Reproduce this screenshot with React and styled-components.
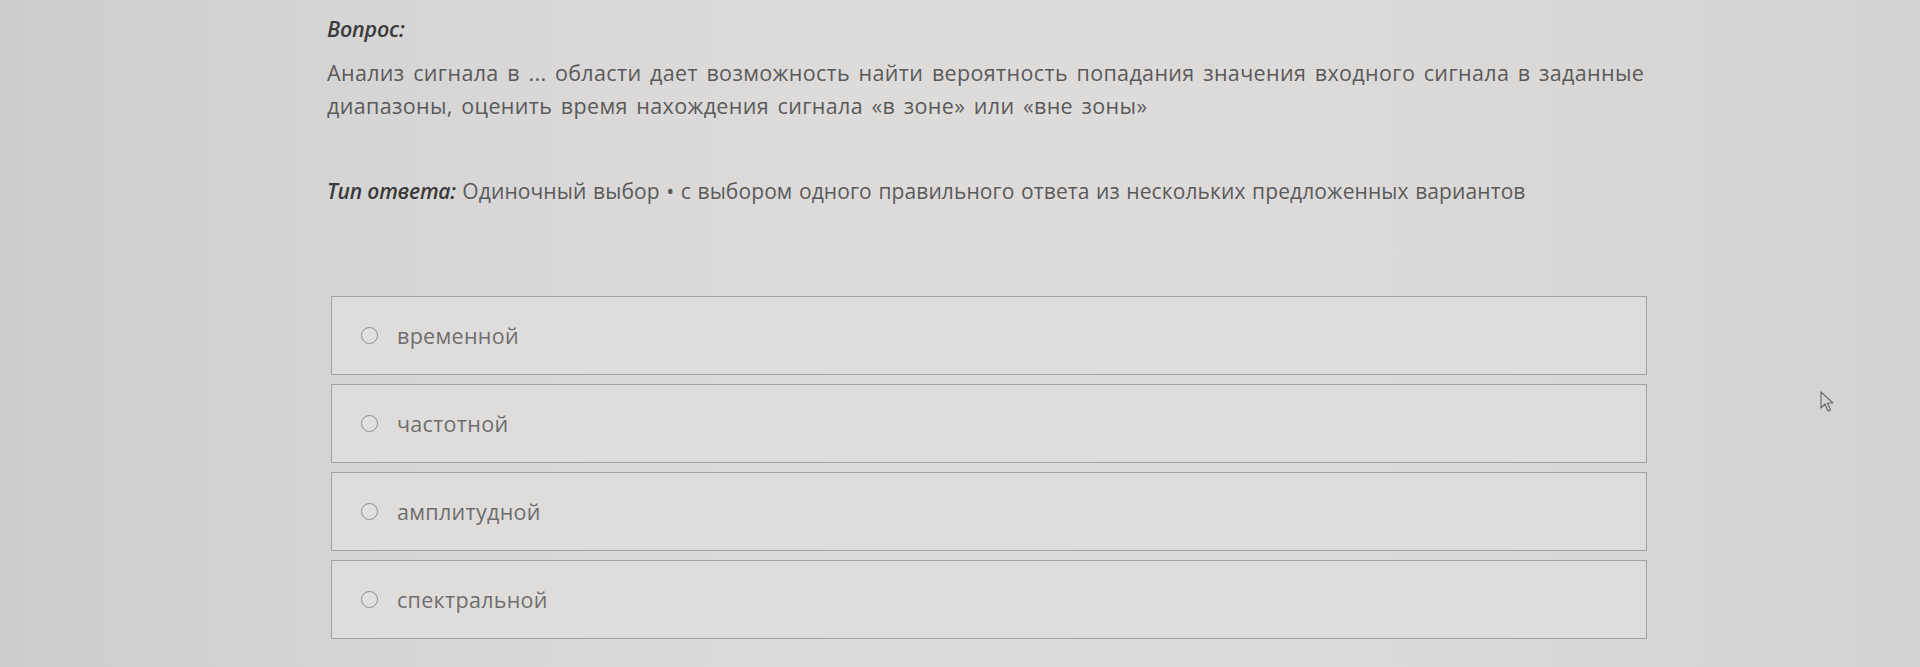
import React from "react";
import styled, { createGlobalStyle } from "styled-components";

const Global = createGlobalStyle`
  html, body { margin: 0; padding: 0; }
  body {
    width: 1920px;
    height: 667px;
    overflow: hidden;
    font-family: "Open Sans", "Noto Sans", sans-serif;
    background: linear-gradient(90deg, #cdcdcf 0%, #d6d5d5 18%, #dedcdb 45%, #dddbda 70%, #d5d3d2 100%);
  }
`;

const Page = styled.div`
  position: relative;
  width: 1920px;
  height: 667px;
  box-sizing: border-box;
  padding: 14px 0 0 327px;
`;

const Label = styled.div`
  font-size: 21.5px;
  font-style: italic;
  font-weight: 600;
  color: #3c3c3c;
  line-height: 30px;
  letter-spacing: -0.2px;
`;

const Question = styled.p`
  margin: 12px 0 0 0;
  width: 1340px;
  font-size: 21.5px;
  line-height: 33px;
  color: #5a5a5a;
  letter-spacing: 0.35px;
  word-spacing: 2.6px;
`;

const AnswerType = styled.div`
  margin-top: 54px;
  font-size: 21px;
  line-height: 30px;
  color: #5a5a5a;
  letter-spacing: 0.1px;
  word-spacing: 1px;
`;

const TypeLabel = styled.span`
  font-style: italic;
  font-weight: 600;
  color: #3a3a3a;
  letter-spacing: -0.2px;
  word-spacing: 0;
`;

const Options = styled.div`
  margin: 90px 0 0 4px;
  width: 1316px;
  display: flex;
  flex-direction: column;
  gap: 9px;
`;

const Option = styled.label`
  display: flex;
  align-items: center;
  gap: 19px;
  height: 79px;
  box-sizing: border-box;
  padding-left: 29px;
  border: 1.5px solid #a3a2a2;
  background: #dfdddc;
  cursor: pointer;
`;

const Radio = styled.span`
  width: 15px;
  height: 15px;
  border-radius: 50%;
  border: 1.5px solid #8f8f8f;
  background: #e2e0df;
  flex: none;
`;

const OptionText = styled.span`
  font-size: 21.5px;
  color: #6e6e6e;
  letter-spacing: 0.3px;
`;

const Cursor = styled.svg`
  position: absolute;
  left: 1820px;
  top: 391px;
`;

const options = ["временной", "частотной", "амплитудной", "спектральной"];

export default function App() {
  return (
    <>
      <Global />
      <Page>
        <Label>Вопрос:</Label>
        <Question>
          Анализ сигнала в ... области дает возможность найти вероятность попадания значения входного сигнала в заданные
          диапазоны, оценить время нахождения сигнала «в зоне» или «вне зоны»
        </Question>
        <AnswerType>
          <TypeLabel>Тип ответа:</TypeLabel> Одиночный выбор • с выбором одного правильного ответа из нескольких предложенных вариантов
        </AnswerType>
        <Options>
          {options.map((o) => (
            <Option key={o}>
              <Radio />
              <OptionText>{o}</OptionText>
            </Option>
          ))}
        </Options>
        <Cursor width="16" height="22" viewBox="0 0 16 22">
          <path d="M1 1 L1 17 L5 13 L8 20 L10.5 19 L7.5 12 L13 12 Z" fill="none" stroke="#6c6c6c" strokeWidth="1.2" strokeLinejoin="round" />
        </Cursor>
      </Page>
    </>
  );
}
